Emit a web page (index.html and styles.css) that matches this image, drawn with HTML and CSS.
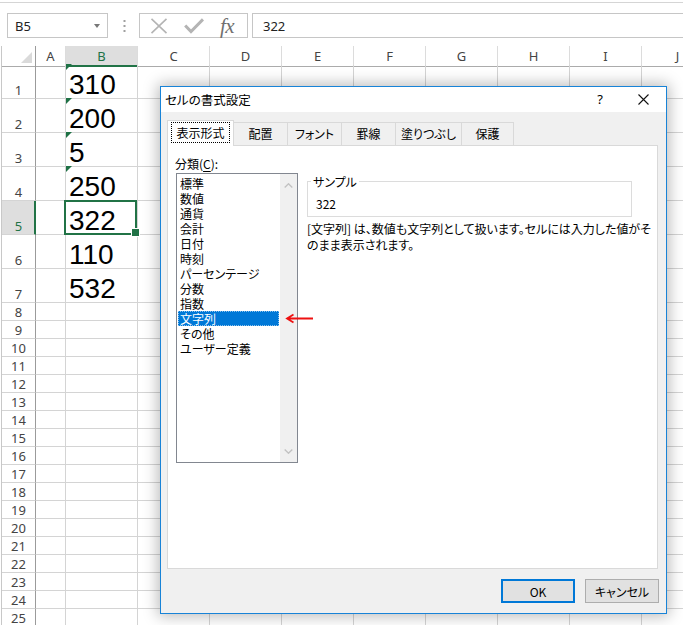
FILE: index.html
```html
<!DOCTYPE html>
<html lang="ja">
<head>
<meta charset="utf-8">
<title>セルの書式設定</title>
<link rel="stylesheet" href="styles.css">
</head>
<body>
<div class="app">
  <div class="ribbon-edge"></div>
  <div class="fbar">
    <div class="namebox"><span>B5</span><span class="dd"></span></div>
    <div class="grip"><svg width="3" height="12" viewBox="0 0 3 12"><rect x="0.5" y="0" width="2" height="2" fill="#a0a0a0"/><rect x="0.5" y="5" width="2" height="2" fill="#a0a0a0"/><rect x="0.5" y="10" width="2" height="2" fill="#a0a0a0"/></svg></div>
    <div class="fbtns">
      <svg class="ico" width="18" height="16" viewBox="0 0 18 16"><path d="M1.5 0.8 L16.5 15.2 M16.5 0.8 L1.5 15.2" stroke="#b4b4b4" stroke-width="1.6" fill="none"/></svg>
      <svg class="ico" width="20" height="16" viewBox="0 0 20 16"><path d="M1.2 7.5 L7 13.6 L19 1.4" stroke="#b4b4b4" stroke-width="3" fill="none"/></svg>
      <span class="fx">fx</span>
    </div>
    <div class="finput">322</div>
  </div>

  <div class="sheet">
    <div class="row hdr">
      <div class="corner"><span class="tri"></span></div>
      <div class="ch">A</div><div class="ch sel">B</div><div class="ch">C</div><div class="ch">D</div><div class="ch">E</div><div class="ch">F</div><div class="ch">G</div><div class="ch">H</div><div class="ch">I</div><div class="ch">J</div>
    </div>
    <div class="row tall"><div class="rh">1</div><div class="c"></div><div class="c num flag">310</div><div class="c"></div><div class="c"></div><div class="c"></div><div class="c"></div><div class="c"></div><div class="c"></div><div class="c"></div><div class="c"></div></div>
    <div class="row tall"><div class="rh">2</div><div class="c"></div><div class="c num flag">200</div><div class="c"></div><div class="c"></div><div class="c"></div><div class="c"></div><div class="c"></div><div class="c"></div><div class="c"></div><div class="c"></div></div>
    <div class="row tall"><div class="rh">3</div><div class="c"></div><div class="c num flag">5</div><div class="c"></div><div class="c"></div><div class="c"></div><div class="c"></div><div class="c"></div><div class="c"></div><div class="c"></div><div class="c"></div></div>
    <div class="row tall"><div class="rh">4</div><div class="c"></div><div class="c num flag">250</div><div class="c"></div><div class="c"></div><div class="c"></div><div class="c"></div><div class="c"></div><div class="c"></div><div class="c"></div><div class="c"></div></div>
    <div class="row tall"><div class="rh sel">5</div><div class="c"></div><div class="c num cursor">322</div><div class="c"></div><div class="c"></div><div class="c"></div><div class="c"></div><div class="c"></div><div class="c"></div><div class="c"></div><div class="c"></div></div>
    <div class="row tall"><div class="rh">6</div><div class="c"></div><div class="c num">110</div><div class="c"></div><div class="c"></div><div class="c"></div><div class="c"></div><div class="c"></div><div class="c"></div><div class="c"></div><div class="c"></div></div>
    <div class="row tall"><div class="rh">7</div><div class="c"></div><div class="c num">532</div><div class="c"></div><div class="c"></div><div class="c"></div><div class="c"></div><div class="c"></div><div class="c"></div><div class="c"></div><div class="c"></div></div>
    <div class="row"><div class="rh">8</div><div class="c"></div><div class="c"></div><div class="c"></div><div class="c"></div><div class="c"></div><div class="c"></div><div class="c"></div><div class="c"></div><div class="c"></div><div class="c"></div></div>
    <div class="row"><div class="rh">9</div><div class="c"></div><div class="c"></div><div class="c"></div><div class="c"></div><div class="c"></div><div class="c"></div><div class="c"></div><div class="c"></div><div class="c"></div><div class="c"></div></div>
    <div class="row"><div class="rh">10</div><div class="c"></div><div class="c"></div><div class="c"></div><div class="c"></div><div class="c"></div><div class="c"></div><div class="c"></div><div class="c"></div><div class="c"></div><div class="c"></div></div>
    <div class="row"><div class="rh">11</div><div class="c"></div><div class="c"></div><div class="c"></div><div class="c"></div><div class="c"></div><div class="c"></div><div class="c"></div><div class="c"></div><div class="c"></div><div class="c"></div></div>
    <div class="row"><div class="rh">12</div><div class="c"></div><div class="c"></div><div class="c"></div><div class="c"></div><div class="c"></div><div class="c"></div><div class="c"></div><div class="c"></div><div class="c"></div><div class="c"></div></div>
    <div class="row"><div class="rh">13</div><div class="c"></div><div class="c"></div><div class="c"></div><div class="c"></div><div class="c"></div><div class="c"></div><div class="c"></div><div class="c"></div><div class="c"></div><div class="c"></div></div>
    <div class="row"><div class="rh">14</div><div class="c"></div><div class="c"></div><div class="c"></div><div class="c"></div><div class="c"></div><div class="c"></div><div class="c"></div><div class="c"></div><div class="c"></div><div class="c"></div></div>
    <div class="row"><div class="rh">15</div><div class="c"></div><div class="c"></div><div class="c"></div><div class="c"></div><div class="c"></div><div class="c"></div><div class="c"></div><div class="c"></div><div class="c"></div><div class="c"></div></div>
    <div class="row"><div class="rh">16</div><div class="c"></div><div class="c"></div><div class="c"></div><div class="c"></div><div class="c"></div><div class="c"></div><div class="c"></div><div class="c"></div><div class="c"></div><div class="c"></div></div>
    <div class="row"><div class="rh">17</div><div class="c"></div><div class="c"></div><div class="c"></div><div class="c"></div><div class="c"></div><div class="c"></div><div class="c"></div><div class="c"></div><div class="c"></div><div class="c"></div></div>
    <div class="row"><div class="rh">18</div><div class="c"></div><div class="c"></div><div class="c"></div><div class="c"></div><div class="c"></div><div class="c"></div><div class="c"></div><div class="c"></div><div class="c"></div><div class="c"></div></div>
    <div class="row"><div class="rh">19</div><div class="c"></div><div class="c"></div><div class="c"></div><div class="c"></div><div class="c"></div><div class="c"></div><div class="c"></div><div class="c"></div><div class="c"></div><div class="c"></div></div>
    <div class="row"><div class="rh">20</div><div class="c"></div><div class="c"></div><div class="c"></div><div class="c"></div><div class="c"></div><div class="c"></div><div class="c"></div><div class="c"></div><div class="c"></div><div class="c"></div></div>
    <div class="row"><div class="rh">21</div><div class="c"></div><div class="c"></div><div class="c"></div><div class="c"></div><div class="c"></div><div class="c"></div><div class="c"></div><div class="c"></div><div class="c"></div><div class="c"></div></div>
    <div class="row"><div class="rh">22</div><div class="c"></div><div class="c"></div><div class="c"></div><div class="c"></div><div class="c"></div><div class="c"></div><div class="c"></div><div class="c"></div><div class="c"></div><div class="c"></div></div>
    <div class="row"><div class="rh">23</div><div class="c"></div><div class="c"></div><div class="c"></div><div class="c"></div><div class="c"></div><div class="c"></div><div class="c"></div><div class="c"></div><div class="c"></div><div class="c"></div></div>
    <div class="row"><div class="rh">24</div><div class="c"></div><div class="c"></div><div class="c"></div><div class="c"></div><div class="c"></div><div class="c"></div><div class="c"></div><div class="c"></div><div class="c"></div><div class="c"></div></div>
    <div class="row"><div class="rh">25</div><div class="c"></div><div class="c"></div><div class="c"></div><div class="c"></div><div class="c"></div><div class="c"></div><div class="c"></div><div class="c"></div><div class="c"></div><div class="c"></div></div>
  </div>

  <div class="dialog">
    <div class="titlebar">
      <span class="title">セルの書式設定</span>
      <span class="help">?</span>
      <svg class="close" width="11" height="11" viewBox="0 0 11 11"><path d="M0.5 0.5 L10.5 10.5 M10.5 0.5 L0.5 10.5" stroke="#111" stroke-width="1.1" fill="none"/></svg>
    </div>
    <div class="dbody">
      <div class="tabs">
        <div class="tab current"><span class="focus">表示形式</span></div>
        <div class="tab">配置</div>
        <div class="tab">フォント</div>
        <div class="tab">罫線</div>
        <div class="tab w67">塗りつぶし</div>
        <div class="tab w53">保護</div>
      </div>
      <div class="panel">
        <div class="leftcol">
          <div class="lbl">分類(<u>C</u>):</div>
          <div class="listbox">
            <ul class="items">
              <li>標準</li>
              <li>数値</li>
              <li>通貨</li>
              <li>会計</li>
              <li>日付</li>
              <li>時刻</li>
              <li>パーセンテージ</li>
              <li>分数</li>
              <li>指数</li>
              <li class="selected">文字列</li>
              <li>その他</li>
              <li>ユーザー定義</li>
            </ul>
            <div class="vscroll">
              <svg width="9" height="5" viewBox="0 0 9 5"><path d="M0.7 4.5 L4.5 0.8 L8.3 4.5" stroke="#c2c2c2" stroke-width="1.4" fill="none"/></svg>
              <svg width="9" height="5" viewBox="0 0 9 5"><path d="M0.7 0.5 L4.5 4.2 L8.3 0.5" stroke="#c2c2c2" stroke-width="1.4" fill="none"/></svg>
            </div>
          </div>
        </div>
        <div class="rightcol">
          <fieldset class="sample">
            <legend>サンプル</legend>
            <div class="sval">322</div>
          </fieldset>
          <p class="desc">[文字列] は、数値も文字列として扱います。セルには入力した値がそ<br>のまま表示されます。</p>
        </div>
      </div>
      <div class="buttons">
        <button class="btn default">OK</button>
        <button class="btn">キャンセル</button>
      </div>
    </div>
  </div>

  <svg class="annot" width="30" height="11" viewBox="0 0 30 11"><path d="M2 5.5 L28 5.5 M8.5 1.5 L2 5.5 L8.5 9.5" stroke="#ee1111" stroke-width="1.8" fill="none"/></svg>
</div>
</body>
</html>
```

FILE: styles.css
```css
* { box-sizing: border-box; }
html, body { margin: 0; padding: 0; }
body {
  width: 683px;
  height: 625px;
  overflow: hidden;
  background: #fff;
  font-family: "Noto Sans", "Noto Sans CJK JP", sans-serif;
  color: #000;
}
.app {
  position: relative;
  width: 683px;
  height: 625px;
  overflow: hidden;
}

/* formula bar */
.ribbon-edge {
  height: 3px;
  border-bottom: 1px solid #d5d5d5;
}
.fbar {
  height: 43px;
  padding-top: 10px;
  display: flex;
  align-items: flex-start;
}
.namebox {
  margin-left: 7px;
  width: 101px;
  height: 25px;
  border: 1px solid #c6c6c6;
  display: flex;
  align-items: center;
  justify-content: space-between;
  padding: 0 7px 0 7px;
  font-size: 13px;
  color: #222;
}
.dd {
  width: 0;
  height: 0;
  border-left: 3.5px solid transparent;
  border-right: 3.5px solid transparent;
  border-top: 4px solid #777;
}
.grip {
  width: 31px;
  height: 25px;
  display: flex;
  align-items: center;
  justify-content: center;
  padding-left: 1px;
}
.fbtns {
  width: 109px;
  height: 25px;
  border: 1px solid #c6c6c6;
  display: flex;
  align-items: center;
  gap: 16px;
  padding-left: 10px;
}
.fx {
  font-family: "Liberation Serif", serif;
  font-style: italic;
  font-size: 21px;
  line-height: 20px;
  color: #707070;
  letter-spacing: -0.5px;
}
.finput {
  margin-left: 4px;
  flex: 1;
  height: 25px;
  border: 1px solid #c6c6c6;
  border-right: none;
  padding-left: 10px;
  display: flex;
  align-items: center;
  font-size: 13px;
  color: #222;
}

/* sheet */
.sheet {
  margin-left: 1px;
  border-left: 1px solid #c8c8c8;
}
.row {
  display: grid;
  grid-template-columns: 34px 30px repeat(9, 72px);
  height: 18px;
}
.row.tall { height: 34px; }
.row.hdr { height: 19px; }
.corner {
  border-right: 1px solid #9b9b9b;
  border-bottom: 1px solid #ababab;
  display: flex;
  align-items: flex-end;
  justify-content: flex-end;
  padding: 0 3px 3px 0;
}
.tri {
  width: 0;
  height: 0;
  border-left: 11px solid transparent;
  border-bottom: 11px solid #dadada;
}
.ch {
  border-right: 1px solid #dcdcdc;
  border-bottom: 1px solid #ababab;
  display: flex;
  align-items: center;
  justify-content: center;
  font-size: 13px;
  color: #444;
}
.ch.sel {
  background: #dedede;
  color: #217346;
  border-bottom: 2px solid #217346;
  padding-top: 1px;
}
.rh {
  border-right: 1px solid #9b9b9b;
  border-bottom: 1px solid #d4d4d4;
  display: flex;
  align-items: flex-end;
  justify-content: center;
  font-size: 13px;
  line-height: 16px;
  color: #444;
}
.rh.sel {
  background: #dedede;
  color: #217346;
  border-right: 2px solid #217346;
  padding-left: 1px;
}
.c {
  position: relative;
  border-right: 1px solid #d4d4d4;
  border-bottom: 1px solid #d4d4d4;
}
.num {
  display: flex;
  align-items: flex-end;
  padding-left: 3px;
  font-family: "Liberation Sans", Arial, sans-serif;
  font-size: 28px;
  line-height: 26px;
  color: #000;
}
.flag::before {
  content: "";
  position: absolute;
  left: 0;
  top: -1px;
  width: 0;
  height: 0;
  border-top: 6px solid #1e7145;
  border-right: 6px solid transparent;
}
.cursor::after {
  content: "";
  position: absolute;
  left: -2px;
  top: -1px;
  right: 0;
  bottom: -1px;
  border: 2px solid #217346;
}
.cursor::before {
  content: "";
  position: absolute;
  right: -3px;
  bottom: -3px;
  width: 7px;
  height: 7px;
  background: #217346;
  border: 1px solid #fff;
  z-index: 1;
}

/* dialog */
.dialog {
  position: absolute;
  left: 160px;
  top: 86px;
  width: 507px;
  height: 528px;
  border: 1px solid #1883d7;
  background: #f0f0f0;
  box-shadow: 0 0 14px 2px rgba(0, 0, 0, 0.28);
  font-family: "Noto Sans CJK JP", "Noto Sans", sans-serif;
  font-size: 12px;
  font-feature-settings: "palt";
  color: #000;
  display: flex;
  flex-direction: column;
}
.titlebar {
  height: 25px;
  background: #fff;
  display: flex;
  align-items: center;
  padding: 0 17px 0 4px;
  line-height: 15px;
}
.title { flex: 1; font-size: 12.5px; }
.help {
  font-family: "Noto Sans", sans-serif;
  font-size: 13px;
  margin-right: 35px;
}
.dbody {
  flex: 1;
  display: flex;
  flex-direction: column;
  padding: 8px 8px 10px 6px;
}
.tabs {
  display: flex;
  align-items: flex-end;
  height: 26px;
  margin-bottom: -1px;
  position: relative;
  z-index: 1;
}
.tab {
  width: 55px;
  height: 23px;
  margin-bottom: 1px;
  margin-right: -1px;
  border: 1px solid #d9d9d9;
  border-bottom: none;
  background: #f0f0f0;
  display: flex;
  align-items: center;
  justify-content: center;
  line-height: 15px;
  padding-bottom: 1px;
}
.tab.w67 { width: 67px; }
.tab.w53 { width: 53px; }
.tab.current {
  width: 67px;
  height: 26px;
  margin-bottom: 0;
  background: #fff;
  padding-bottom: 2px;
}
.focus {
  outline: 1px dotted #000;
  outline-offset: 0;
  padding: 2px 4px 2px 4px;
}
.panel {
  height: 424px;
  border: 1px solid #d9d9d9;
  background: #fff;
  display: flex;
  padding: 10px 0 0 8px;
}
.leftcol {
  width: 122px;
  display: flex;
  flex-direction: column;
}
.lbl {
  line-height: 15px;
  margin-left: -1px;
}
.lbl u { text-underline-offset: 2px; }
.listbox {
  margin-top: 2px;
  height: 290px;
  border: 1px solid #828790;
  background: #fff;
  display: flex;
}
.items {
  flex: 1;
  list-style: none;
  margin: 0;
  padding: 2px 1px;
  line-height: 15px;
}
.items li {
  height: 15px;
  padding-left: 2px;
  white-space: nowrap;
}
.items li.selected {
  background: #0078d7;
  color: #fff;
  outline: 1px dotted rgba(255, 255, 255, 0.55);
  outline-offset: -1px;
}
.vscroll {
  width: 17px;
  background: #f0f0f0;
  display: flex;
  flex-direction: column;
  justify-content: space-between;
  align-items: center;
  padding: 9px 0 8px 0;
}
.vscroll svg { display: block; }
.rightcol {
  margin-left: 9px;
  width: 325px;
}
.sample {
  margin: 18px 0 0 0;
  padding: 7px 8px 5px 8px;
  border: 1px solid #dcdcdc;
  min-width: 0;
}
.sample legend {
  padding: 0 2px;
  margin-left: -5px;
  line-height: 15px;
}
.sval {
  line-height: 15px;
}
.desc {
  margin: 4px 0 0 0;
  line-height: 16px;
  white-space: nowrap;
}
.buttons {
  margin-top: 10px;
  margin-right: -1px;
  display: flex;
  justify-content: flex-end;
  gap: 10px;
}
.btn {
  width: 74px;
  height: 24px;
  border: 1px solid #adadad;
  background: #e1e1e1;
  font-family: "Noto Sans CJK JP", "Noto Sans", sans-serif;
  font-size: 12px;
  font-feature-settings: "palt";
  color: #000;
  padding: 0;
  margin: 0;
}
.btn.default {
  border: 2px solid #0078d7;
}

/* annotation arrow */
.annot {
  position: absolute;
  left: 285px;
  top: 313px;
}
```
